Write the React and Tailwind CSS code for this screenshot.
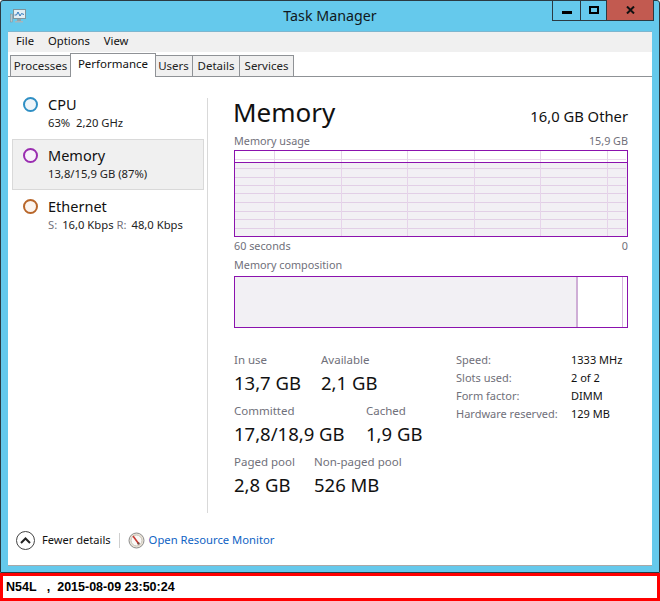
const font = { fontFamily: '"Noto Sans", sans-serif' };

function Tab({ label, w, active }) {
  return active ? (
    <div className={`h-[24px] ${w} -mb-px -mx-px z-10 relative border border-b-0 border-[#8f9296] bg-white flex items-center justify-center text-[11.5px] text-[#111] pb-[3px]`}>{label}</div>
  ) : (
    <div className={`h-[21px] ${w} border border-b-0 border-l-0 first:border-l border-[#8f9296] bg-[#f0f0f0] flex items-center justify-center text-[11.5px] text-[#222]`}>{label}</div>
  );
}

function Side({ color, fill, title, children, active }) {
  return (
    <div className={`h-[51px] w-[192px] flex pl-[10px] pt-[5px] border ${active ? 'bg-[#f0f0f0] border-[#d9d9d9]' : 'border-transparent'}`}>
      <div className={`w-[15px] h-[15px] mt-[3px] rounded-full border-2 ${color} ${fill}`} />
      <div className="ml-[10px]">
        <div className="text-[14.5px] leading-[20px] text-[#111]">{title}</div>
        <div className="mt-[1px] text-[11.25px] leading-[15px] text-[#222] whitespace-pre">{children}</div>
      </div>
    </div>
  );
}

function Stat({ label, value, w }) {
  return (
    <div className={w}>
      <div className="text-[11.5px] leading-[16px] text-[#70707a]">{label}</div>
      <div className="text-[18.5px] leading-[26px] text-[#111] mt-[2px] whitespace-nowrap">{value}</div>
    </div>
  );
}

function Spec({ k, v }) {
  return (
    <div className="flex h-[18px] items-center text-[11px]">
      <span className="w-[115px] text-[#70707a] whitespace-nowrap">{k}</span>
      <span className="text-[#111] whitespace-nowrap">{v}</span>
    </div>
  );
}

function Chart() {
  const vs = [40, 107, 173, 240, 306, 373];
  const hs = [18, 27, 35, 43, 52, 61, 69, 78];
  return (
    <svg width="394" height="87" className="block" shapeRendering="crispEdges">
      <rect x="0" y="12" width="394" height="75" fill="#f2f0f4" />
      <line x1="1" x2="392" y1="9.5" y2="9.5" stroke="#ecd9ee" />
      {hs.map((y) => <line key={y} x1="1" x2="392" y1={y + 0.5} y2={y + 0.5} stroke="#e2cfe6" />)}
      {vs.map((x) => <line key={x} x1={x + 0.5} x2={x + 0.5} y1="1" y2="86" stroke="#e6d4ea" />)}
      <line x1="0" x2="394" y1="12.5" y2="12.5" stroke="#8b12ae" />
      <rect x="0.5" y="0.5" width="393" height="86" fill="none" stroke="#8b12ae" />
    </svg>
  );
}

function AppIcon() {
  return (
    <svg width="16" height="16" viewBox="0 0 16 16">
      <rect x="3.5" y="1.5" width="12" height="9" fill="#e3eef4" stroke="#7f949c" />
      <path d="M4.5 7 L6.5 7 L8 4 L10 8 L11.5 5.5 L14 6.5" fill="none" stroke="#2f78bd" strokeWidth="1" />
      <rect x="7" y="11" width="4" height="2" fill="#8fa2aa" />
      <rect x="5" y="13" width="8" height="1.5" fill="#a8b6bc" />
      <rect x="0.5" y="6" width="2" height="8" fill="#b8c4ca" stroke="#7f8f96" strokeWidth="0.5" />
    </svg>
  );
}

function Gauge() {
  return (
    <svg width="17" height="17" viewBox="0 0 17 17">
      <circle cx="8.5" cy="8.5" r="7.5" fill="#e9e2d6" stroke="#8d8d8d" strokeWidth="1" />
      <circle cx="8.5" cy="8.5" r="5.4" fill="#fbfaf8" stroke="#b9b4aa" strokeWidth="0.7" />
      <line x1="5" y1="4" x2="10.5" y2="11.5" stroke="#c83a32" strokeWidth="1.6" />
      <circle cx="10.5" cy="11.5" r="1.2" fill="#7a4a40" />
    </svg>
  );
}

export default function App() {
  return (
    <div className="w-[660px] h-[601px] bg-white flex flex-col" style={font}>
      <div className="h-[573px] bg-[#65c9ec] border border-[#2b3a42] rounded-t-[3px] flex flex-col px-[7px] pb-[6px]">
        <div className="h-[30px] shrink-0 grid grid-cols-[1fr_auto_1fr] -mx-[7px]">
          <div className="pl-[9px] pt-[7px]"><AppIcon /></div>
          <div className="text-[14.25px] leading-[30px] text-[#101820]">Task Manager</div>
          <div className="flex justify-end pr-[5px]">
            <div className="flex h-[21px] -mt-px border border-[#2b3a42] border-t-0">
              <div className="w-[28px] flex items-center justify-center border-r border-[#2b3a42] pt-[4px]"><div className="w-[10px] h-[3px] bg-black" /></div>
              <div className="w-[26px] flex items-center justify-center border-r border-[#2b3a42]"><div className="w-[10px] h-[8px] border-2 border-black" /></div>
              <div className="w-[46px] bg-[#c25a50] flex items-center justify-center">
                <svg width="9" height="8" viewBox="0 0 9 8"><path d="M1 0.5 L8 7.5 M8 0.5 L1 7.5" stroke="#111" strokeWidth="2" /></svg>
              </div>
            </div>
          </div>
        </div>
        <div className="flex-1 bg-white border-t border-b border-t-[#7db6cf] border-b-[#a8a8a8] flex flex-col min-h-0">
          <div className="h-[20px] bg-[#f0f0f0] flex items-center gap-[14px] pl-[8px] pb-[2px] text-[11.25px] text-[#111]">
            <span>File</span><span>Options</span><span>View</span>
          </div>
          <div className="h-[25px] flex items-end pl-[2px] border-b border-[#8f9296]">
            <Tab label="Processes" w="w-[61px]" />
            <Tab label="Performance" w="w-[86px]" active />
            <Tab label="Users" w="w-[38px]" />
            <Tab label="Details" w="w-[47px]" />
            <Tab label="Services" w="w-[54px]" />
          </div>
          <div className="flex-1 flex flex-col min-h-0">
            <div className="h-[437px] flex pt-[21px] pl-[4px]">
              <div className="w-[196px] border-r border-[#d9d9d9] h-[415px] shrink-0">
                <div className="-mt-[10px]">
                  <Side color="border-[#2f8fc4]" fill="bg-[#eef5fa]" title="CPU">63%  2,20 GHz</Side>
                  <Side color="border-[#9a2db0]" fill="bg-[#f8f1fa]" title="Memory" active>13,8/15,9 GB (87%)</Side>
                  <Side color="border-[#b8662a]" fill="bg-[#fcf4ee]" title="Ethernet">
                    <span className="text-[#70707a] mr-[2px]">S: </span>16,0 Kbps <span className="text-[#70707a] mr-[2px]">R: </span>48,0 Kbps
                  </Side>
                </div>
              </div>
              <div className="w-[394px] ml-[26px]">
                <div className="flex justify-between items-end h-[29px]">
                  <div className="text-[26px] leading-[29px] text-[#111] -ml-px">Memory</div>
                  <div className="text-[14.75px] leading-[22px] text-[#111]">16,0 GB Other</div>
                </div>
                <div className="flex justify-between h-[18px] items-end mt-[3px] mb-[2px] text-[10.8px] leading-[14px] text-[#70707a]">
                  <span>Memory usage</span><span>15,9 GB</span>
                </div>
                <Chart />
                <div className="flex justify-between h-[16px] items-end text-[10.8px] leading-[14px] text-[#70707a]">
                  <span>60 seconds</span><span>0</span>
                </div>
                <div className="mt-[3px] h-[18px] text-[10.8px] leading-[18px] text-[#70707a]">Memory composition</div>
                <div className="mt-[2px] h-[52px] border border-[#8b12ae] flex">
                  <div className="w-[341px] bg-[#f2f0f4]" />
                  <div className="w-[2px] bg-[#cfaed6]" />
                  <div className="flex-1" />
                  <div className="w-[1px] bg-[#d6b4de] mr-[4px]" />
                </div>
                <div className="flex justify-between mt-[24px]">
                  <div className="flex flex-col gap-[7px]">
                    <div className="flex">
                      <Stat label="In use" value="13,7 GB" w="w-[87px]" />
                      <Stat label="Available" value="2,1 GB" />
                    </div>
                    <div className="flex">
                      <Stat label="Committed" value="17,8/18,9 GB" w="w-[132px]" />
                      <Stat label="Cached" value="1,9 GB" />
                    </div>
                    <div className="flex">
                      <Stat label="Paged pool" value="2,8 GB" w="w-[80px]" />
                      <Stat label="Non-paged pool" value="526 MB" />
                    </div>
                  </div>
                  <div className="w-[172px] -mt-px">
                    <Spec k="Speed:" v="1333 MHz" />
                    <Spec k="Slots used:" v="2 of 2" />
                    <Spec k="Form factor:" v="DIMM" />
                    <Spec k="Hardware reserved:" v="129 MB" />
                  </div>
                </div>
              </div>
            </div>
            <div className="flex-1 flex items-center pl-[8px] pt-[2px]">
              <div className="w-[19px] h-[19px] rounded-full border-[1.5px] border-[#444] flex items-center justify-center">
                <svg width="11" height="7" viewBox="0 0 11 7"><path d="M1 6 L5.5 1.5 L10 6" fill="none" stroke="#222" strokeWidth="2" /></svg>
              </div>
              <span className="ml-[7px] text-[11.1px] text-[#111] whitespace-nowrap">Fewer details</span>
              <div className="ml-[8px] w-px h-[15px] bg-[#cfcfcf]" />
              <div className="ml-[8px]"><Gauge /></div>
              <span className="ml-[4px] text-[11.25px] text-[#0f63c4] whitespace-nowrap">Open Resource Monitor</span>
            </div>
          </div>
        </div>
      </div>
      <div className="h-[28px] border-[3px] border-[#ff0000] bg-white flex items-center pl-[3px] text-[12.5px] font-bold text-black whitespace-pre" style={{ fontFamily: '"Liberation Sans", sans-serif' }}>
        N54L   ,  2015-08-09 23:50:24
      </div>
    </div>
  );
}
